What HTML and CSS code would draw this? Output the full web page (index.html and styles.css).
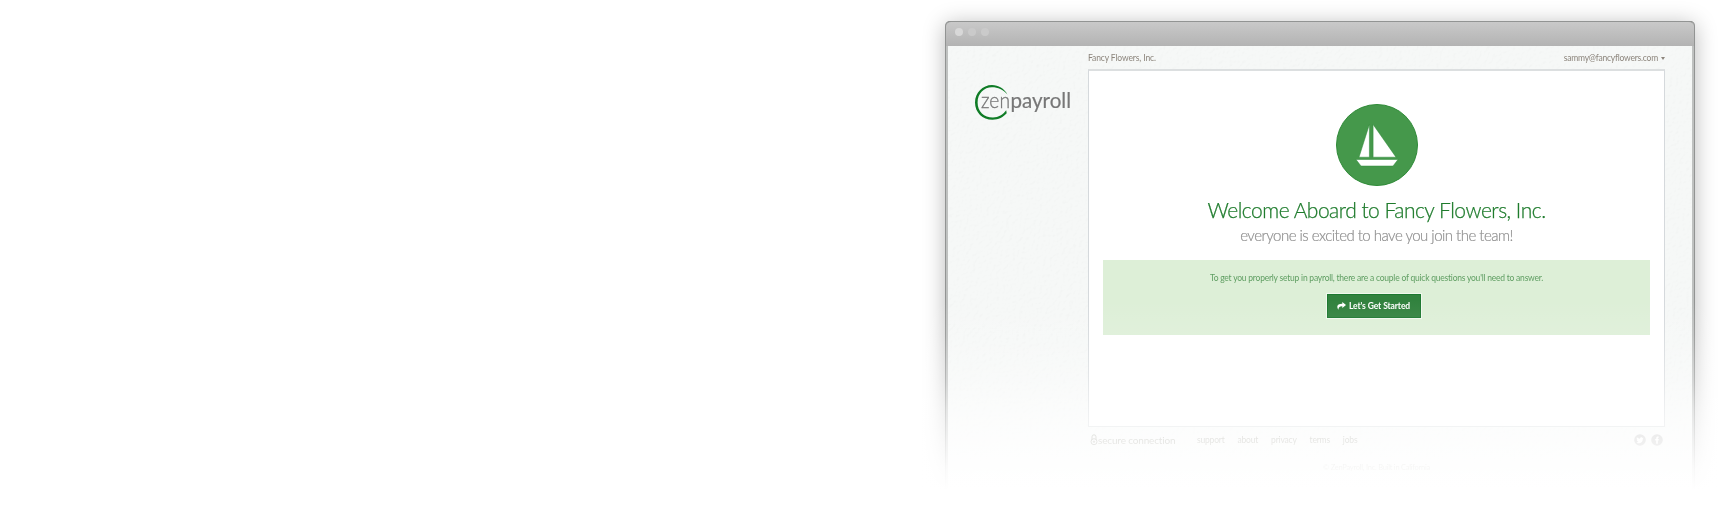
FILE: index.html
```html
<!DOCTYPE html>
<html lang="en">
<head>
<meta charset="utf-8">
<title>ZenPayroll</title>
<link rel="stylesheet" href="styles.css">
</head>
<body>
<main class="window">
  <header class="titlebar"><i class="dot"></i><i class="dot"></i><i class="dot"></i></header>
  <div class="page">
    <svg class="paper" aria-hidden="true">
      <filter id="paper" x="0" y="0" width="100%" height="100%">
        <feTurbulence type="fractalNoise" baseFrequency="0.3" numOctaves="3" seed="4" result="n"/>
        <feDiffuseLighting in="n" lighting-color="#ffffff" surfaceScale="0.35" diffuseConstant="1.17">
          <feDistantLight azimuth="225" elevation="58"/>
        </feDiffuseLighting>
      </filter>
      <rect width="100%" height="100%" filter="url(#paper)"/>
    </svg>
    <aside class="side">
      <svg class="logo" width="100" height="40" viewBox="0 0 100 40">
        <path class="ring" d="M34.500 11.500C31 5.500 25.500 2 19 2C9.500 2 2 10 2 19.500C2 29.500 9.500 36.800 19.500 36.800C25.500 36.800 30.500 34 33.700 30.300L33.200 27.300C30 31.500 25.500 34.500 20 34.500C11 34.500 4.600 28.500 4.600 19.500C4.600 10.500 11 4.300 19 4.300C25 4.300 30 6.500 34.500 11.500Z"/>
        <text class="zen" x="8" y="24.500" textLength="29" lengthAdjust="spacingAndGlyphs">zen</text>
        <text class="payroll" x="37.500" y="24.500" textLength="60.500" lengthAdjust="spacingAndGlyphs">payroll</text>
      </svg>
    </aside>
    <section class="main">
      <div class="top"><span class="company">Fancy Flowers, Inc.</span><span class="account"><span class="email">sammy@fancyflowers.com</span><i class="caret"></i></span></div>
      <div class="panel">
        <svg class="boat" width="83" height="83" viewBox="0 0 83 83">
          <circle cx="41" cy="41" r="40.500"/>
          <path d="M33.400 20.500V53.200H23ZM37.100 20.500L60 53.200H37.100ZM20 55.500H62L57 62H25Z"/>
        </svg>
        <h1 class="title">Welcome Aboard to Fancy Flowers, Inc.</h1>
        <p class="subtitle">everyone is excited to have you join the team!</p>
        <div class="notice">
          <p class="hint">To get you properly setup in payroll, there are a couple of quick questions you'll need to answer.</p>
          <button class="start"><svg width="9" height="8" viewBox="0 0 9 8"><path d="M5.300 0L9 3L5.300 6V4.300C3 4.200 1.600 5 1.400 7.800C-1 4 .5 1.700 5.300 1.700Z"/></svg><span>Let's Get Started</span></button>
        </div>
      </div>
      <footer class="footer">
        <div class="row">
          <span class="secure"><svg width="8" height="12" viewBox="0 0 8 12"><path d="M2 6V2.800a2 2 0 0 1 4 0V6"/><circle cx="4" cy="7.700" r="3"/><circle cx="4" cy="7.700" r=".7"/></svg><span class="connection">secure connection</span></span>
          <nav class="links"><a>support</a><a>about</a><a>privacy</a><a>terms</a><a>jobs</a></nav>
          <span class="social">
            <svg width="12" height="12" viewBox="0 0 12 12"><circle cx="6" cy="6" r="5.800"/><path d="M2.500 8.400C5.500 10.500 9 8.500 8.900 4.800L9.700 3.800L8.700 4C8 2.600 5.800 3 6 4.800C4.700 4.700 3.700 4.200 2.900 3.300C2.400 4.500 2.800 5.400 3.500 5.900L2.800 5.800C2.900 6.800 3.600 7.300 4.300 7.600C3.700 8.200 3.100 8.400 2.500 8.400Z"/></svg>
            <svg width="12" height="12" viewBox="0 0 12 12"><circle cx="6" cy="6" r="5.800"/><path d="M5.200 9.700V6.400H4.200V5H5.200V4C5.200 2.900 5.900 2.300 7.700 2.500V3.700C6.900 3.600 6.800 3.800 6.800 4.300V5H7.800L7.600 6.400H6.800V9.700Z"/></svg>
          </span>
        </div>
        <p class="copyright">© ZenPayroll, Inc. Built in California</p>
      </footer>
    </section>
  </div>
</main>
</body>
</html>
```
FILE: styles.css
```css
* { box-sizing: border-box; }
body { margin: 0; height: 525px; overflow: hidden; background: #fff; font-family: Lato, sans-serif; display: flex; justify-content: flex-end; align-items: flex-start; }
.window { width: 750px; height: 504px; margin: 21px 25px 0 0; padding: 0 3px; border-radius: 5px 5px 0 0; background: #bfc1c0; box-shadow: inset 1px 1px #929493, inset -1px 0 #929493, 0 3px 22px rgba(0,0,0,.28); flex: none; position: relative; }
.window::after { content: ""; position: absolute; inset: 279px -25px 0 -40px; background: linear-gradient(rgba(255,255,255,0), rgba(255,255,255,.1) 35px, rgba(255,255,255,.35) 80px, rgba(255,255,255,.6) 110px, rgba(255,255,255,.78) 140px, rgba(255,255,255,.93) 168px, #fff 190px); }
.titlebar { height: 25px; margin: 0 -2px; padding: 6px 0 0 9px; display: flex; gap: 5px; background: linear-gradient(#c9c9c9, #b3b3b3); border-top: 1px solid #929493; border-radius: 5px 5px 0 0; }
.dot { width: 8px; height: 8px; border-radius: 50%; background: #cacaca; }
.dot:first-child { background: #d8d8d8; }
.page { height: 479px; background: #f6f8f7; display: flex; position: relative; }
.paper { position: absolute; width: 100%; height: 100%; opacity: .3; mix-blend-mode: multiply; }
.side { width: 140px; padding: 37px 0 0 25px; position: relative; }
.logo { display: block; overflow: visible; }
.ring { fill: #0f7c26; }
.zen, .payroll { font-size: 22px; fill: #777; }
.zen { font-weight: 300; stroke: #777; stroke-width: .3px; }
.payroll { stroke: #777; stroke-width: .2px; }
.main { width: 577px; position: relative; }
.top { height: 23px; padding-top: 6px; display: flex; justify-content: space-between; font-size: 8.500px; line-height: 13px; color: #8c857c; }
.company { letter-spacing: -.12px; }
.email { letter-spacing: -.22px; }
.account { display: flex; }
.caret { margin: 5px 0 0 3px; height: 0; border: 2.500px solid transparent; border-top: 3px solid #8c857c; border-bottom: 0; }
.panel { height: 358px; background: #fff; border: 1px solid #d5d9dc; border-top: 2px solid #dcdfe0; padding: 33px 14px 0; display: flex; flex-direction: column; align-items: center; }
.boat { display: block; margin-left: 1px; }
.boat circle { fill: #45984b; stroke: #2f8b38; }
.boat path { fill: #fff; stroke: #2f8b38; stroke-width: .5; }
.title { margin: 9px 0 0; font-weight: 300; font-size: 21px; line-height: 28px; letter-spacing: -.5px; color: #1f7c2d; -webkit-text-stroke: .25px #1f7c2d; white-space: nowrap; }
.subtitle { margin: 0; font-weight: 300; font-size: 15px; line-height: 22px; letter-spacing: -.52px; color: #909090; -webkit-text-stroke: .2px #909090; white-space: nowrap; }
.notice { align-self: stretch; margin-top: 14px; height: 75px; background: #ddefd7; display: flex; flex-direction: column; align-items: center; padding-top: 12px; }
.hint { margin: 0; font-size: 8.500px; line-height: 12px; letter-spacing: -.22px; color: #5f9e62; white-space: nowrap; }
.start { margin: 10px 6px 0 0; width: 94px; height: 24px; padding: 0; border: 1px solid #1d7830; background: #31823e; box-shadow: 0 0 0 1px rgba(255,255,255,.55); display: flex; align-items: center; justify-content: center; gap: 3px; color: #fff; font: bold 8.500px/12px Lato, sans-serif; letter-spacing: -.1px; white-space: nowrap; }
.start path { fill: #fff; }
.footer { color: #8e8e83; }
.row { display: flex; height: 25px; align-items: center; padding: 0 2px 0 2px; }
.secure { display: flex; align-items: center; width: 107px; font-size: 10px; letter-spacing: -.15px; white-space: nowrap; }
.secure svg { fill: none; stroke: #8e8e83; flex: none; }
.links { display: flex; gap: 13px; font-size: 8.500px; letter-spacing: -.2px; }
.social { margin-left: auto; display: flex; gap: 5px; }
.social circle { fill: #b5b5b5; }
.social path { fill: #fff; }
.copyright { margin: 10px 0 0; text-align: center; font-size: 7.500px; line-height: 12px; letter-spacing: -.25px; }
```
